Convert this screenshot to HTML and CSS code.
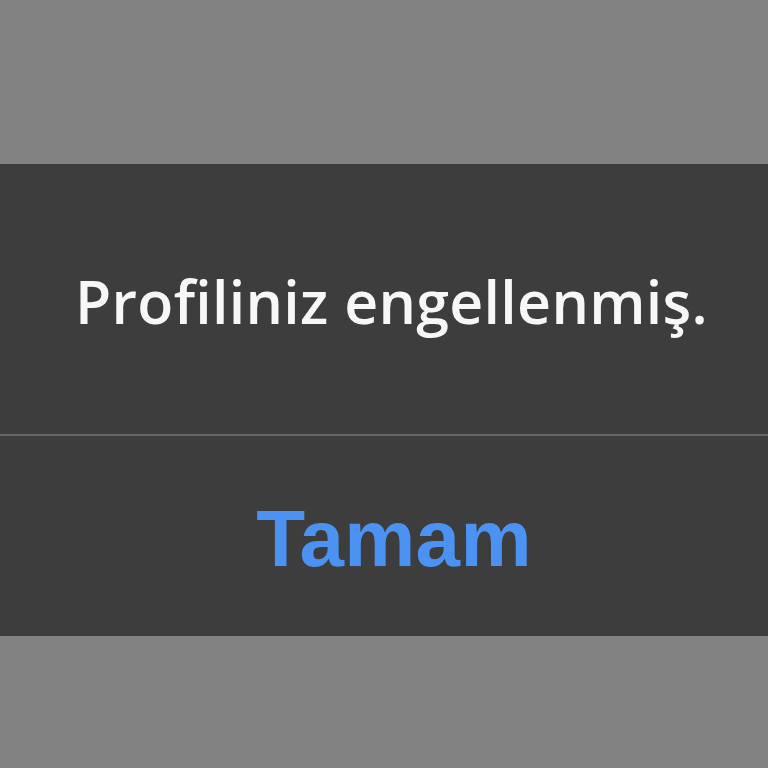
FILE: index.html
```html
<!DOCTYPE html>
<html lang="tr">
<head>
<meta charset="utf-8">
<link rel="stylesheet" href="styles.css">
</head>
<body>
<div class="screen">
  <div class="dialog">
    <div class="message">Profiliniz engellenmiş.</div>
    <div class="divider"></div>
    <div class="action">Tamam</div>
  </div>
</div>
</body>
</html>
```
FILE: styles.css
```css
html, body {
  margin: 0;
  padding: 0;
  background: #828282;
}
.screen {
  width: 768px;
  height: 768px;
  display: flex;
  flex-direction: column;
  padding-top: 164px;
  box-sizing: border-box;
}
.dialog {
  background: #3d3d3d;
  height: 472px;
  display: flex;
  flex-direction: column;
}
.message {
  height: 270px;
  display: flex;
  align-items: center;
  justify-content: center;
  padding-left: 15px;
  padding-top: 4px;
  box-sizing: border-box;
  font-family: "Open Sans", "Noto Sans", sans-serif;
  font-weight: 600;
  font-size: 59px;
  color: #f7f7f7;
  letter-spacing: 0.3px;
}
.divider {
  height: 2px;
  background: #666666;
}
.action {
  flex: 1;
  display: flex;
  align-items: center;
  justify-content: center;
  padding-left: 20px;
  padding-top: 5px;
  font-family: "Liberation Sans", Arial, sans-serif;
  font-weight: bold;
  font-size: 80px;
  letter-spacing: 0.3px;
  color: #4b92f2;
}
```
